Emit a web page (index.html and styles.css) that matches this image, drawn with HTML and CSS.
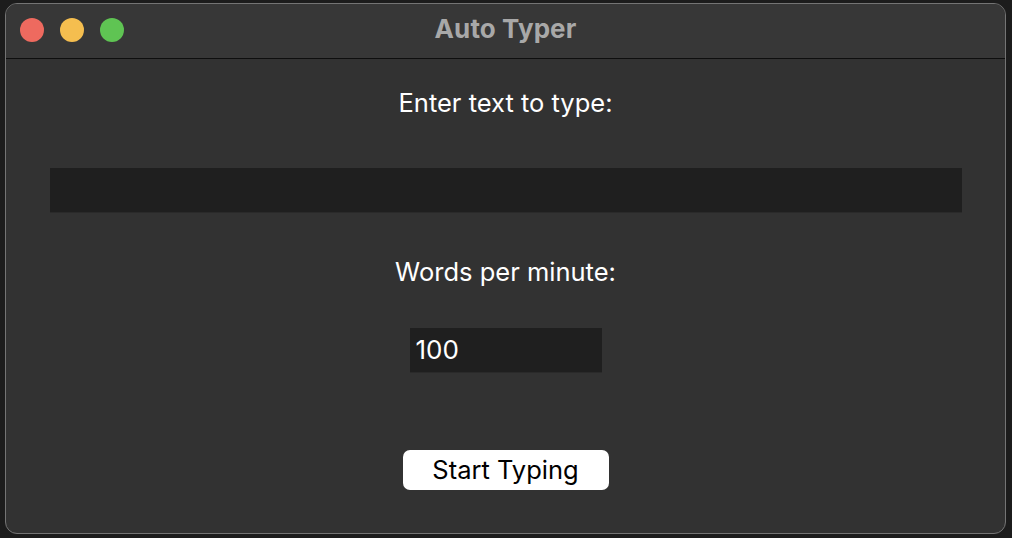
FILE: index.html
```html
<!DOCTYPE html>
<html>
<head>
<meta charset="utf-8">
<link rel="stylesheet" href="styles.css">
</head>
<body>
<div class="window">
  <div class="titlebar">
    <div class="lights">
      <span class="light red"></span>
      <span class="light yellow"></span>
      <span class="light green"></span>
    </div>
    <div class="title">Auto Typer</div>
  </div>
  <div class="content">
    <div class="label label-text">Enter text to type:</div>
    <div class="field field-wide"></div>
    <div class="label label-wpm">Words per minute:</div>
    <div class="field field-num">100</div>
    <div class="button">Start Typing</div>
  </div>
</div>
</body>
</html>
```
FILE: styles.css
```css
html, body {
  margin: 0;
  padding: 0;
  background: #1c1c1c;
  width: 1012px;
  height: 538px;
  overflow: hidden;
  font-family: Inter, "Liberation Sans", sans-serif;
}
body {
  padding: 3px 5px 0 5px;
  box-sizing: border-box;
}
.window {
  width: 1001px;
  height: 531px;
  box-sizing: border-box;
  border: 1px solid #747474;
  border-radius: 12px;
  background: #323232;
  overflow: hidden;
  display: flex;
  flex-direction: column;
}
.titlebar {
  height: 54px;
  background: #373737;
  border-bottom: 1px solid #0e0e0e;
  position: relative;
  display: flex;
  align-items: center;
  justify-content: center;
  flex-shrink: 0;
}
.lights {
  position: absolute;
  left: 14px;
  top: 14px;
  display: flex;
  gap: 16px;
}
.light {
  width: 24px;
  height: 24px;
  border-radius: 50%;
  display: block;
}
.red { background: #ee6a5f; }
.yellow { background: #f5be4f; }
.green { background: #5fc453; }
.title {
  color: #a8a8a8;
  font-weight: 700;
  font-size: 26px;
  line-height: 30px;
  letter-spacing: 0.1px;
  margin-top: -5px;
}
.content {
  display: flex;
  flex-direction: column;
  align-items: center;
}
.label {
  color: #ffffff;
  font-size: 25.5px;
  line-height: 30px;
  height: 30px;
}
.label-text { margin-top: 29px; }
.label-wpm { margin-top: 45px; }
.field {
  background: #1f1f1f;
  height: 44px;
  box-sizing: border-box;
  box-shadow: 0 1px 0 #2a2a2a;
}
.field-wide {
  margin-top: 50px;
  width: 912px;
}
.field-num {
  margin-top: 41px;
  width: 192px;
  color: #ffffff;
  font-size: 26px;
  line-height: 44px;
  padding-left: 6px;
}
.button {
  margin-top: 78px;
  width: 206px;
  height: 40px;
  background: #ffffff;
  border-radius: 7px;
  color: #000000;
  font-size: 25.5px;
  line-height: 40px;
  text-align: center;
}
```
